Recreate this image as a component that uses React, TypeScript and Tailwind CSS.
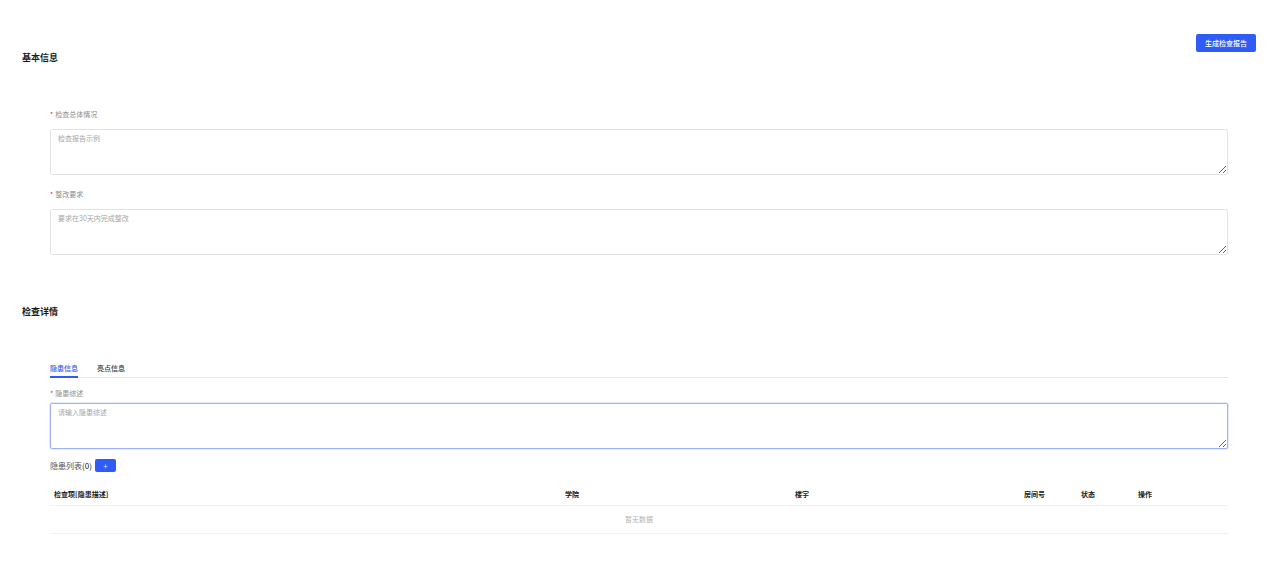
import { useState } from 'react'

const font = { fontFamily: '"Noto Sans CJK SC", "Noto Sans", sans-serif' }

function Label({ text }: { text: string }) {
  return (
    <div className="text-[7px] leading-[10px] text-[#8c8c8c]">
      <span className="text-[#f5222d] mr-[2px]">*</span>
      {text}
    </div>
  )
}

function Area({ placeholder, focused }: { placeholder: string; focused?: boolean }) {
  return (
    <textarea
      placeholder={placeholder}
      className={
        'block w-full h-[46px] rounded-[2px] border px-[7px] py-[3px] text-[7px] leading-[10px] outline-none placeholder:text-[#a6a6a6] ' +
        (focused ? 'border-[#9fb3f6] shadow-[0_0_0_1px_#e4eafd]' : 'border-[#e3e3e3]')
      }
    />
  )
}

const cols = [
  { name: '检查项[隐患描述]', w: 'w-[511px]' },
  { name: '学院', w: 'w-[230px]' },
  { name: '楼宇', w: 'w-[229px]' },
  { name: '房间号', w: 'w-[57px]' },
  { name: '状态', w: 'w-[57px]' },
  { name: '操作', w: 'flex-1' },
]

export default function App() {
  const [tab, setTab] = useState(0)

  return (
    <div className="w-[1280px] h-[566px] bg-white text-[#1a1a1a]" style={font}>
      <div className="flex justify-end pt-[34px] pr-[24px]">
        <button className="h-[18px] w-[60px] rounded-[2px] bg-[#2f5cf6] text-white text-[7px] font-medium leading-[18px]">
          生成检查报告
        </button>
      </div>
      <h2 className="ml-[22px] text-[9px] leading-[12px] font-bold">基本信息</h2>

      <div className="mx-[50px] w-[1178px]">
        <div className="mt-[45px]"><Label text="检查总体情况" /></div>
        <div className="mt-[10px]"><Area placeholder="检查报告示例" /></div>
        <div className="mt-[14px]"><Label text="整改要求" /></div>
        <div className="mt-[10px]"><Area placeholder="要求在30天内完成整改" /></div>
      </div>

      <h2 className="mt-[51px] ml-[22px] text-[9px] leading-[12px] font-bold">检查详情</h2>

      <div className="mx-[50px] w-[1178px]">
        <div className="mt-[45px] flex gap-[19px] border-b border-[#e6e6e6]">
          {['隐患信息', '亮点信息'].map((t, i) => (
            <button
              key={t}
              onClick={() => setTab(i)}
              className={
                'pb-[3px] text-[7px] leading-[10px] font-medium border-b-2 -mb-px ' +
                (tab === i ? 'text-[#2f5cf6] border-[#2f5cf6]' : 'text-[#333] border-transparent')
              }
            >
              {t}
            </button>
          ))}
        </div>

        <div className="mt-[10px]"><Label text="隐患综述" /></div>
        <div className="mt-[5px]"><Area placeholder="请输入隐患综述" focused /></div>

        <div className="mt-[10px] flex items-center gap-[3px]">
          <span className="text-[8px] leading-[13px] text-[#555]">隐患列表<span className="text-[#222]">(0)</span></span>
          <button className="w-[21px] h-[13px] rounded-[2px] bg-[#2f5cf6] text-[#dfe6ff] text-[8px] leading-[13px]">+</button>
        </div>

        <div className="mt-[10px]">
          <div className="flex h-[24px] items-center border-b border-[#f2f2f2]">
            {cols.map(c => (
              <div key={c.name} className={c.w + ' px-[4px] text-[7px] leading-[10px] font-bold text-[#1a1a1a]'}>
                {c.name}
              </div>
            ))}
          </div>
          <div className="h-[28px] flex items-center justify-center border-b border-[#f2f2f2] text-[7px] text-[#b3b3b3]">
            暂无数据
          </div>
        </div>
      </div>
    </div>
  )
}
